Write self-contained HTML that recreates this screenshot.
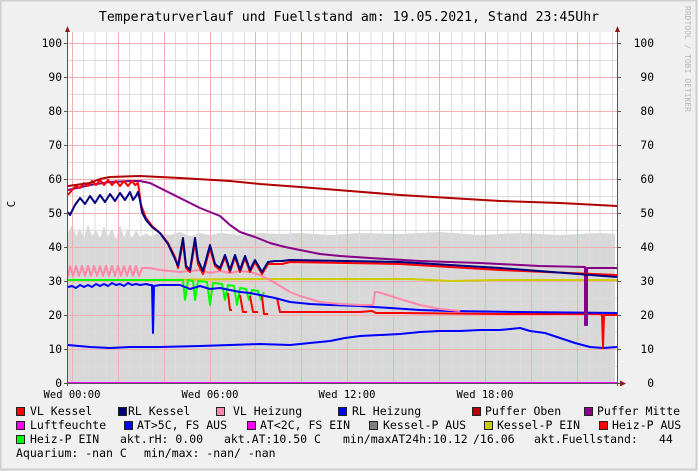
<!DOCTYPE html>
<html><head><meta charset="utf-8"><style>
html,body{margin:0;padding:0;background:#f0f0f0;}
svg{display:block;}
text{font-family:"DejaVu Sans Mono","Liberation Mono",monospace;fill:#000;}
</style></head><body>
<svg width="698" height="471" viewBox="0 0 698 471" xmlns="http://www.w3.org/2000/svg">
<rect x="0" y="0" width="698" height="471" fill="#f0f0f0"/>
<rect x="0.5" y="0.5" width="696" height="469" fill="none" stroke="#cfcfcf" stroke-width="2"/>
<rect x="68" y="32" width="549" height="351" fill="#ffffff"/>
<path d="M68,383 L68,233 72,225 76,236 80,228 84,238 88,224 92,236 96,230 100,238 104,226 108,236 112,229 116,239 120,225 124,237 128,228 132,238 136,230 140,237 146,233 150,236 160,233 170,235 180,232 190,236 200,233 210,235 220,233 240,235 260,233 280,234 300,233 330,235 360,233 400,234 440,232 480,235 520,233 560,235 600,233 615,234 L615,383 Z" fill="#d8d8d8"/>
<g stroke="#dcdcdc" stroke-width="1">
<path d="M68,366.5H617M68,332.5H617M68,298.5H617M68,264.5H617M68,230.5H617M68,196.5H617M68,162.5H617M68,128.5H617M68,94.5H617M68,60.5H617"/>
<path d="M83.5,32V383M106.5,32V383M129.5,32V383M152.5,32V383M175.5,32V383M198.5,32V383M221.5,32V383M244.5,32V383M267.5,32V383M290.5,32V383M313.5,32V383M336.5,32V383M359.5,32V383M382.5,32V383M405.5,32V383M428.5,32V383M451.5,32V383M474.5,32V383M497.5,32V383M520.5,32V383M543.5,32V383M566.5,32V383M589.5,32V383M612.5,32V383"/>
<path d="M95,32V383M141,32V383M187,32V383M233,32V383M279,32V383M325,32V383M371,32V383M416,32V383M462,32V383M508,32V383M554,32V383M600,32V383"/>
</g>
<g stroke="#f0b0b0" stroke-width="1">
<path d="M68,349.5H617M68,315.5H617M68,281.5H617M68,247.5H617M68,213.5H617M68,179.5H617M68,145.5H617M68,111.5H617M68,77.5H617M68,43.5H617"/>
<path d="M72.5,32V383M118.5,32V383M164.5,32V383M210.5,32V383M255.5,32V383M301.5,32V383M347.5,32V383M393.5,32V383M439.5,32V383M485.5,32V383M531.5,32V383M577.5,32V383"/>
</g>
<g fill="none" stroke-linejoin="round">
<path d="M68,345 L90,347 110,348 130,347 160,347 200,346 230,345 260,344 290,345 310,343 330,341 345,338 360,336 380,335 400,334 420,332 440,331 460,331 480,330 500,330 520,328 530,331 545,333 560,338 575,343 590,347 603,348 617,347" stroke="#0000ff" stroke-width="2"/>
<path d="M68,280 L150,280 250,279 350,279 410,279 450,281 500,280 560,280 617,280" stroke="#cccc00" stroke-width="2"/>
<path d="M68,280 L183,280 185,300 188,280 193,281 195,300 198,281 207,282 210,305 213,283 222,284 225,300 228,285 234,286 237,305 240,288 246,289 249,300 252,290 258,291 261,300 264,292" stroke="#00ff00" stroke-width="2"/>
<path d="M228,293 L230,310 232,310 M240,295 L243,312 247,312 M250,296 L253,312 258,312 M262,296 L264,314 268,314 M277,298 L280,312 300,312 360,312 372,311 376,313 400,313 500,314 600,314 602,315 603,348 604,315 617,315" stroke="#ff0000" stroke-width="2"/>
<path d="M68,287 L72,286 76,288 80,285 84,287 88,285 92,287 96,284 100,286 104,284 108,286 112,283 116,285 120,284 124,286 128,283 132,285 136,284 140,285 146,284 150,285 152,285 153,333 154,286 160,285 180,285 190,289 200,286 210,289 220,288 230,290 240,292 250,293 260,295 275,298 290,302 310,304 330,305 360,306 390,308 420,310 450,311 520,312 617,313" stroke="#0000ff" stroke-width="2"/>
<path d="M68,277 L70,266 73,276 76,266 79,276 82,266 85,276 88,266 91,276 94,266 97,276 100,266 103,276 106,266 109,276 112,266 115,276 118,266 121,276 124,266 127,276 130,266 133,276 136,266 139,276 142,268 150,268 160,270 170,271 180,272 190,271 200,270 210,273 220,271 230,273 240,271 250,272 260,275 270,280 280,286 290,292 300,296 310,299 320,302 340,304 360,305 373,305 375,292 378,292 400,299 420,305 440,309 460,311" stroke="#ff88aa" stroke-width="2"/>
<path d="M68,190 L90,185 110,182 130,181 140,181 150,183 160,188 170,193 180,198 190,203 200,208 210,212 220,216 230,225 240,232 255,237 270,243 285,247 300,250 320,254 340,256 370,258 420,261 480,263 540,266 585,267 585,325 587,325 587,268 617,268" stroke="#880088" stroke-width="2"/>
<path d="M68,195 L72,190 76,186 80,188 84,183 88,186 92,181 96,185 100,180 104,185 108,180 112,185 116,181 120,186 124,181 128,186 132,181 135,185 138,183 141,205 146,218 152,226 160,233 168,243 175,257 178,268 183,242 186,268 190,272 195,242 198,264 203,274 210,248 215,266 220,270 225,257 230,272 235,257 240,272 245,258 250,272 255,262 262,274 268,264 275,264 282,264 290,262 400,264 500,270 617,275" stroke="#ff0000" stroke-width="2"/>
<path d="M68,212 L70,215 75,205 80,198 85,204 90,196 95,203 100,195 105,202 110,194 115,201 120,193 125,200 130,192 133,200 136,196 138,192 140,200 142,212 146,220 152,227 160,233 168,244 175,259 178,266 183,238 186,266 190,270 195,238 198,260 203,271 210,245 215,264 220,268 225,255 230,270 235,255 240,270 245,256 250,270 255,260 262,272 268,262 275,261 282,261 290,260 400,262 500,268 617,277" stroke="#000080" stroke-width="2"/>
<path d="M68,186 L90,183 100,179 110,177 140,176 180,178 230,181 260,184 300,187 350,191 400,195 450,198 500,201 560,203 617,206" stroke="#b00000" stroke-width="2"/>
<path d="M68,383 H617" stroke="#ff00ff" stroke-width="2"/>
</g>
<g stroke="#555" stroke-width="1">
<path d="M67.5,30V386M617.5,30V386M64,383.5H622"/>
<path d="M64,43.5h4M64,77.5h4M64,111.5h4M64,145.5h4M64,179.5h4M64,213.5h4M64,247.5h4M64,281.5h4M64,315.5h4M64,349.5h4M617,43.5h4M617,77.5h4M617,111.5h4M617,145.5h4M617,179.5h4M617,213.5h4M617,247.5h4M617,281.5h4M617,315.5h4M617,349.5h4"/>
</g>
<path d="M65,32L67.5,26L70,32Z M615,32L617.5,26L620,32Z M620,380.5L626,383.5L620,386.5Z" fill="#8b1a1a"/>
<g font-size="11.3" text-anchor="end">
<text x="62" y="47">100</text><text x="62" y="81">90</text><text x="62" y="115">80</text><text x="62" y="149">70</text><text x="62" y="183">60</text><text x="62" y="217">50</text><text x="62" y="251">40</text><text x="62" y="285">30</text><text x="62" y="319">20</text><text x="62" y="353">10</text><text x="62" y="387">0</text>
</g>
<g font-size="11.3" text-anchor="end">
<text x="654" y="47">100</text><text x="654" y="81">90</text><text x="654" y="115">80</text><text x="654" y="149">70</text><text x="654" y="183">60</text><text x="654" y="217">50</text><text x="654" y="251">40</text><text x="654" y="285">30</text><text x="654" y="319">20</text><text x="654" y="353">10</text><text x="654" y="387">0</text>
</g>
<g font-size="10.5" text-anchor="middle">
<text x="72" y="398">Wed 00:00</text><text x="210" y="398">Wed 06:00</text><text x="347" y="398">Wed 12:00</text><text x="485" y="398">Wed 18:00</text>
</g>
<text x="18" y="207" font-size="11" text-anchor="middle" transform="rotate(-90 15 207)">C</text>
<text x="349" y="21" font-size="13.2" text-anchor="middle">Temperaturverlauf und Fuellstand am: 19.05.2021, Stand 23:45Uhr</text>
<text x="685" y="6" font-size="8" style="fill:#b8b8b8" transform="rotate(90 685 6)">RRDTOOL / TOBI OETIKER</text>
<g stroke="#222" stroke-width="1">
<rect x="16.5" y="407.5" width="8" height="8" fill="#ff0000"/>
<rect x="118.5" y="407.5" width="8" height="8" fill="#000080"/>
<rect x="216.5" y="407.5" width="8" height="8" fill="#ff88aa"/>
<rect x="338.5" y="407.5" width="8" height="8" fill="#0000ff"/>
<rect x="472.5" y="407.5" width="8" height="8" fill="#b00000"/>
<rect x="584.5" y="407.5" width="8" height="8" fill="#880088"/>
<rect x="16.5" y="421.5" width="8" height="8" fill="#ff00ff"/>
<rect x="124.5" y="421.5" width="8" height="8" fill="#0000ff"/>
<rect x="247.5" y="421.5" width="8" height="8" fill="#ff00ff"/>
<rect x="369.5" y="421.5" width="8" height="8" fill="#808080"/>
<rect x="484.5" y="421.5" width="8" height="8" fill="#cccc00"/>
<rect x="599.5" y="421.5" width="8" height="8" fill="#ff0000"/>
<rect x="16.5" y="435.5" width="8" height="8" fill="#00ff00"/>
</g>
<g font-size="11.5">
<text x="30" y="415">VL Kessel</text><text x="128" y="415">RL Kessel</text><text x="233" y="415">VL Heizung</text><text x="352" y="415">RL Heizung</text><text x="485" y="415">Puffer Oben</text><text x="597" y="415">Puffer Mitte</text>
<text x="30" y="429">Luftfeuchte</text><text x="137" y="429">AT&gt;5C, FS AUS</text><text x="260" y="429">AT&lt;2C, FS EIN</text><text x="383" y="429">Kessel-P AUS</text><text x="497" y="429">Kessel-P EIN</text><text x="612" y="429">Heiz-P AUS</text>
<text x="30" y="443">Heiz-P EIN</text><text x="120" y="443">akt.rH: 0.00</text><text x="224" y="443">akt.AT:10.50 C</text><text x="343" y="443">min/maxAT24h:10.12</text><text x="473" y="443">/16.06</text><text x="534" y="443">akt.Fuellstand:</text><text x="659" y="443">44</text>
<text x="16" y="457">Aquarium: -nan C</text><text x="144" y="457">min/max: -nan/ -nan</text>
</g>
</svg>
</body></html>
